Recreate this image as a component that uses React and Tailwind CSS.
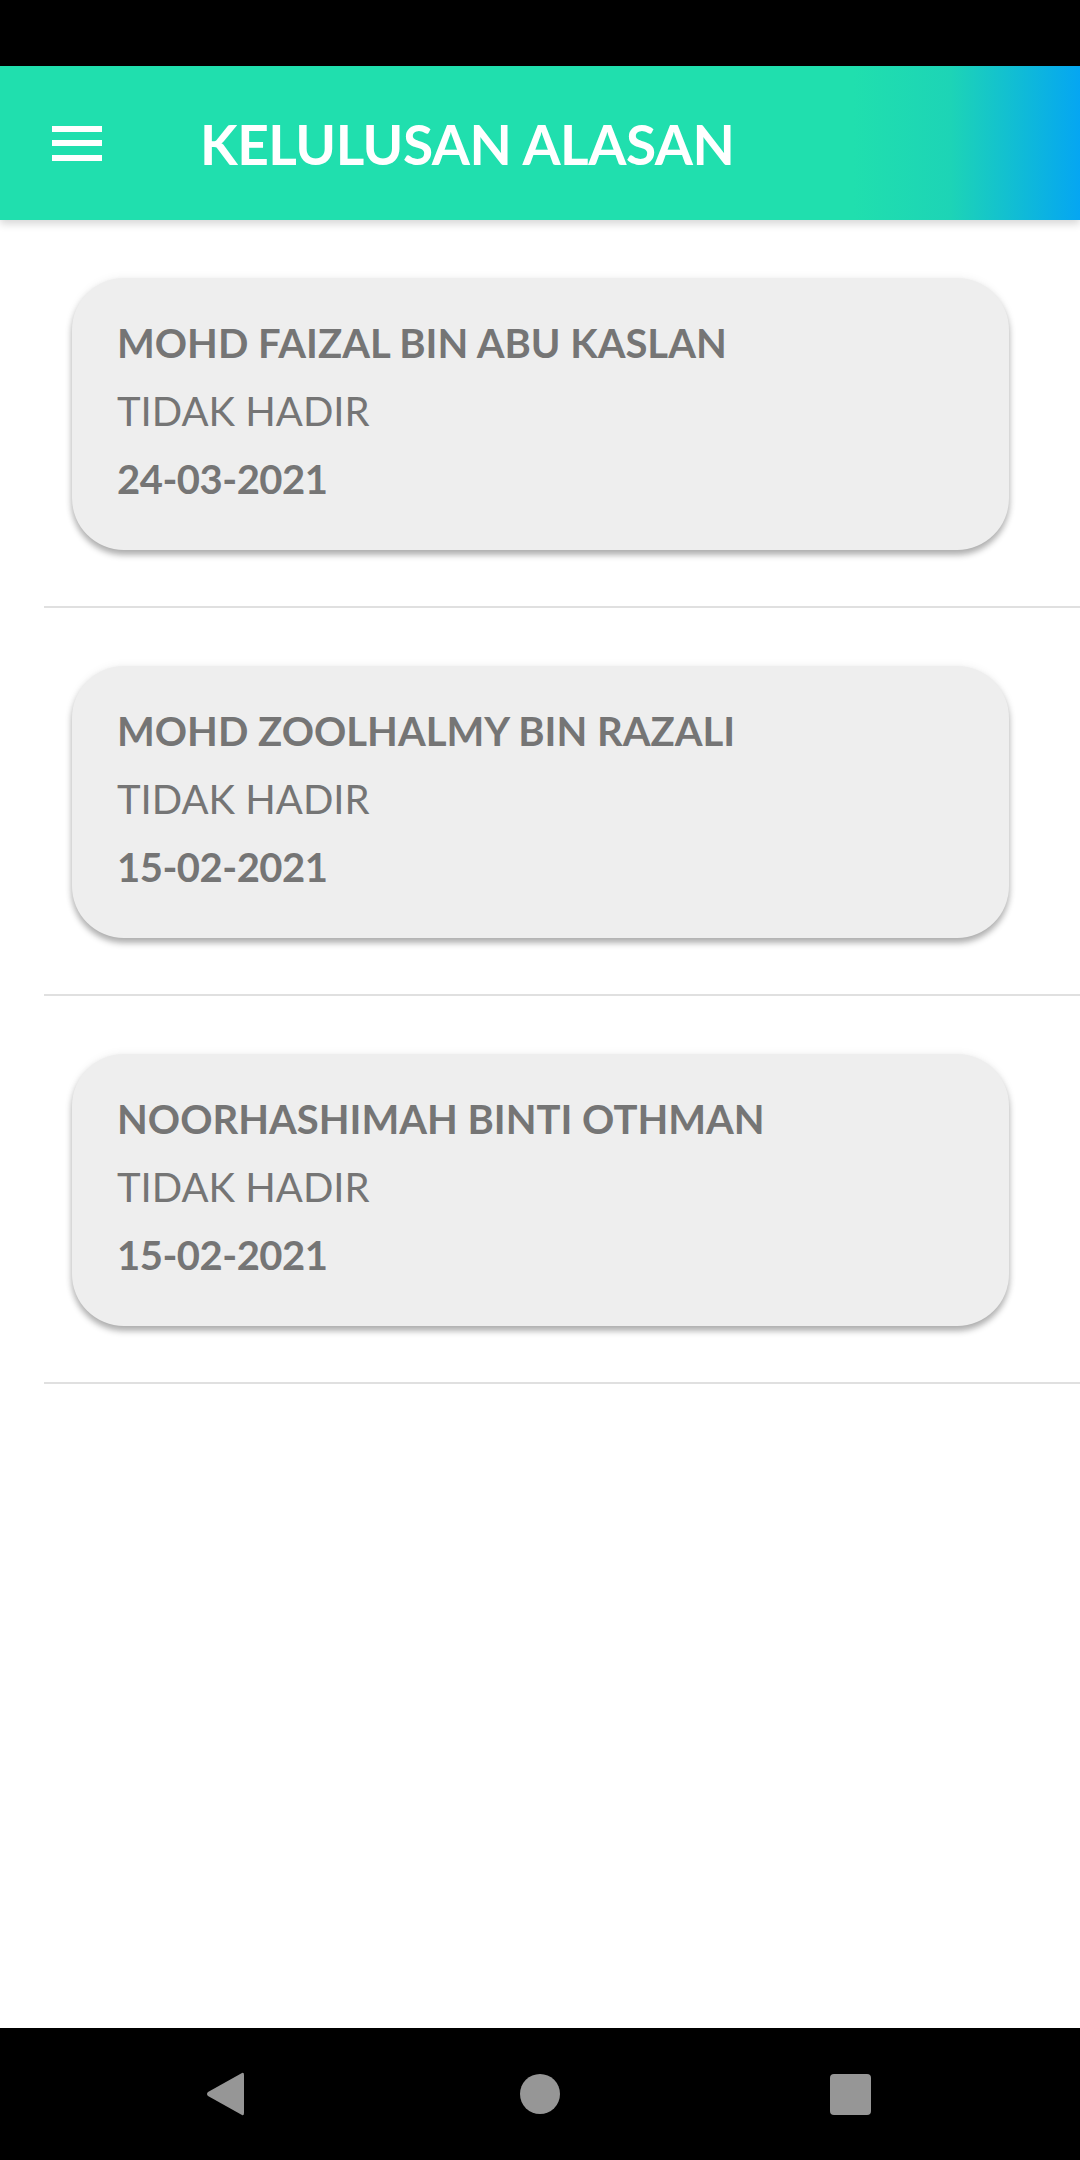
const items = [
  { name: 'MOHD FAIZAL BIN ABU KASLAN', reason: 'TIDAK HADIR', date: '24-03-2021' },
  { name: 'MOHD ZOOLHALMY BIN RAZALI', reason: 'TIDAK HADIR', date: '15-02-2021' },
  { name: 'NOORHASHIMAH BINTI OTHMAN', reason: 'TIDAK HADIR', date: '15-02-2021' },
]

function ReasonCard({ item }) {
  return (
    <div className="ml-[72px] mr-[71px] h-[272px] rounded-[52px] bg-[#eeeeee] pl-[45px] pt-[31px] text-[40px] leading-[68px] text-[#757575] shadow-[0_5px_6px_rgba(0,0,0,0.3),0_0_10px_rgba(0,0,0,0.06)]">
      <p className="font-bold">{item.name}</p>
      <p className="font-normal">{item.reason}</p>
      <p className="font-bold tracking-[-0.5px]">{item.date}</p>
    </div>
  )
}

export default function App() {
  return (
    <div className="flex h-[2160px] w-[1080px] flex-col overflow-hidden bg-white" style={{ fontFamily: 'Lato, "Noto Sans", sans-serif' }}>
      {/* status bar */}
      <div className="h-[66px] shrink-0 bg-black" />

      {/* app bar */}
      <header className="relative z-10 flex h-[154px] shrink-0 items-center bg-[linear-gradient(90deg,#20dfae_79%,#1dd4b6_88%,#05a6f2_100%)] shadow-[0_4px_8px_rgba(0,0,0,0.16)]">
        <div className="ml-[52px] flex h-[35px] w-[50px] flex-col justify-between">
          <span className="block h-[6px] bg-white" />
          <span className="block h-[6px] bg-white" />
          <span className="block h-[6px] bg-white" />
        </div>
        <h1 className="ml-[98px] mt-[2px] text-[55px] font-bold leading-none tracking-[-0.5px] text-white">KELULUSAN ALASAN</h1>
      </header>

      {/* list */}
      <main className="flex-1 pt-[58px]">
        {items.map((item, i) => (
          <div key={i} className="pb-[58px]">
            <ReasonCard item={item} />
            <div className="ml-[44px] mt-[56px] h-[2px] bg-[#e0e0e0]" />
          </div>
        ))}
      </main>

      {/* nav bar */}
      <nav className="flex h-[132px] shrink-0 items-center bg-black">
        <div className="flex w-full items-center">
          <svg className="ml-[205px]" width="40" height="46" viewBox="0 0 40 46">
            <path d="M37 2 Q39 1 39 4 L39 42 Q39 45 37 44 L3 25 Q1 23 3 21 Z" fill="#969696" />
          </svg>
          <span className="ml-[275px] block h-[40px] w-[40px] rounded-full bg-[#969696]" />
          <span className="ml-[270px] block h-[41px] w-[41px] rounded-[4px] bg-[#969696]" />
        </div>
      </nav>
    </div>
  )
}
